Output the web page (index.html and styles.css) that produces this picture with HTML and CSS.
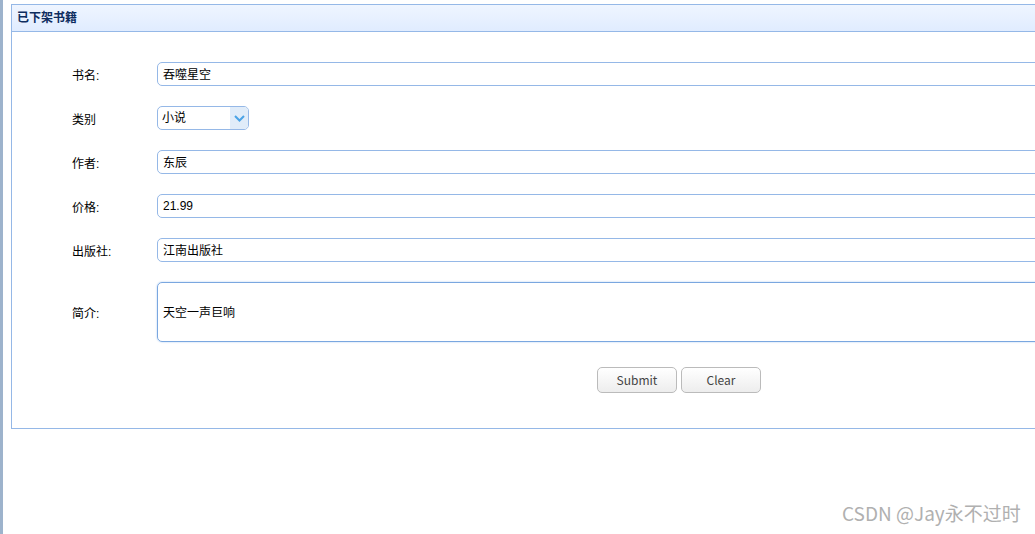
FILE: index.html
```html
<!DOCTYPE html>
<html lang="zh">
<head>
<meta charset="utf-8">
<title>已下架书籍</title>
<link rel="stylesheet" href="styles.css">
</head>
<body>
<div class="page">
  <div class="panel">
    <div class="panel-header">已下架书籍</div>
    <div class="panel-body">
      <form class="form">
        <label class="lbl">书名:</label>
        <div class="field"><input class="txt" type="text" value="吞噬星空"></div>
        <label class="lbl">类别</label>
        <div class="field">
          <div class="select">
            <span class="select-text">小说</span>
            <span class="select-arrow">
              <svg width="11" height="7" viewBox="0 0 11 7"><path d="M1 1 L5.5 5.5 L10 1" fill="none" stroke="#4aa3e6" stroke-width="2"/></svg>
            </span>
          </div>
        </div>
        <label class="lbl">作者:</label>
        <div class="field"><input class="txt" type="text" value="东辰"></div>
        <label class="lbl">价格:</label>
        <div class="field"><input class="txt" type="text" value="21.99"></div>
        <label class="lbl">出版社:</label>
        <div class="field"><input class="txt" type="text" value="江南出版社"></div>
        <label class="lbl">简介:</label>
        <div class="field"><div class="area">天空一声巨响</div></div>
      </form>
      <div class="buttons">
        <button class="btn" type="button">Submit</button>
        <button class="btn" type="button">Clear</button>
      </div>
    </div>
  </div>
</div>
<div class="watermark">CSDN @Jay永不过时</div>
</body>
</html>
```
FILE: styles.css
```css
html, body {
  margin: 0;
  padding: 0;
  background: #fff;
  overflow: hidden;
  width: 1035px;
  height: 534px;
  font-family: "Liberation Sans", "Noto Sans CJK SC", sans-serif;
  font-size: 12px;
  color: #000;
}
.page {
  height: 534px;
  border-left: 3px solid #9db3cc;
  padding: 4px 0 0 8px;
  box-sizing: border-box;
  overflow: hidden;
}
.panel {
  width: 1100px;
  border: 1px solid #95b8e7;
}
.panel-header {
  height: 26px;
  line-height: 26px;
  padding-left: 5px;
  background: linear-gradient(#eff5ff, #e0ecff);
  border-bottom: 1px solid #95b8e7;
  font-weight: bold;
  color: #0e2d5f;
  font-size: 12px;
}
.panel-body {
  padding: 30px 0 35px 60px;
}
.form {
  display: grid;
  grid-template-columns: 85px 1fr;
  row-gap: 20px;
  align-items: center;
}
.lbl {
  font-size: 12px;
  color: #000;
}
.txt {
  display: block;
  width: 100%;
  height: 24px;
  box-sizing: border-box;
  border: 1px solid #95b8e7;
  border-radius: 5px;
  padding: 0 5px 1px;
  font-family: inherit;
  font-size: 12px;
  color: #000;
  outline: none;
}
.select {
  width: 92px;
  height: 24px;
  box-sizing: border-box;
  border: 1px solid #95b8e7;
  border-radius: 5px;
  display: flex;
  align-items: stretch;
  overflow: hidden;
}
.select-text {
  flex: 1;
  padding-left: 4px;
  line-height: 22px;
}
.select-arrow {
  width: 18px;
  background: #e0ecf9;
  display: flex;
  align-items: center;
  justify-content: center;
}
.area {
  height: 60px;
  box-sizing: border-box;
  border: 1px solid #7aa7e0;
  border-radius: 5px;
  box-shadow: 0 0 2px #a9c8ef;
  padding: 0 5px 1px;
  display: flex;
  align-items: center;
}
.buttons {
  margin-top: 25px;
  padding-left: 525px;
  display: flex;
  gap: 4px;
}
.btn {
  width: 80px;
  height: 26px;
  border: 1px solid #bbb;
  border-radius: 5px;
  background: linear-gradient(#ffffff, #ededed);
  font-family: "Noto Sans CJK SC", "Open Sans", sans-serif;
  font-size: 12px;
  color: #444;
  padding: 0 0 1px;
}
.watermark {
  position: absolute;
  left: 842px;
  top: 499px;
  font-family: "Noto Sans CJK SC", sans-serif;
  font-size: 19px;
  color: #b0b0b0;
}
```
